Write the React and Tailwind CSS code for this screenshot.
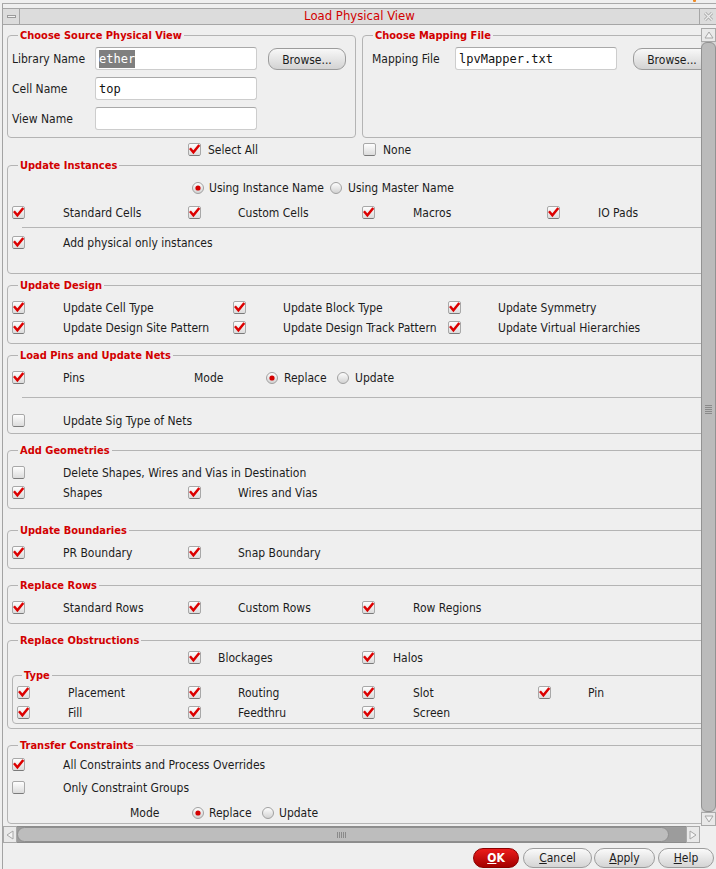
import React from "react";

const FONT = "font-['DejaVu_Sans_Condensed','DejaVu_Sans',sans-serif] font-stretch-condensed";

function CB({ on = true }) {
  return (
    <svg width="13" height="13" viewBox="0 0 13 13" className="shrink-0 block">
      <defs>
        <linearGradient id="cbg" x1="0" y1="0" x2="0" y2="1">
          <stop offset="0" stopColor="#ffffff" />
          <stop offset="1" stopColor="#dadada" />
        </linearGradient>
      </defs>
      <rect x="0.5" y="0.5" width="12" height="12" rx="1.5" fill="url(#cbg)" stroke="#a8a8a8" />
      <path d="M1.5 12.5 H11.5" stroke="#7a7a7a" />
      {on && (
        <path d="M2.8 6.2 L5.4 9.2 L10.5 3" fill="none" stroke="#dc0000" strokeWidth="2.5" strokeLinecap="square" />
      )}
    </svg>
  );
}

function RB({ on }) {
  return (
    <svg width="12" height="12" viewBox="0 0 12 12" className="shrink-0 block">
      <defs>
        <linearGradient id="rbg" x1="0" y1="0" x2="0" y2="1">
          <stop offset="0" stopColor="#ffffff" />
          <stop offset="1" stopColor="#d0d0d0" />
        </linearGradient>
      </defs>
      <circle cx="6" cy="6" r="5.5" fill="url(#rbg)" stroke="#a0a0a0" />
      {on && <circle cx="6" cy="6" r="2.6" fill="#d40000" />}
    </svg>
  );
}

function Chk({ on = true, label, ml = "ml-[38px]", w = "" }) {
  return (
    <div className={`flex items-center shrink-0 ${w}`}>
      <CB on={on} />
      <span className={`${ml} whitespace-nowrap`}>{label}</span>
    </div>
  );
}

function Rad({ on, label, ml = "ml-[5px]", w = "" }) {
  return (
    <div className={`flex items-center shrink-0 ${w}`}>
      <RB on={on} />
      <span className={`${ml} whitespace-nowrap`}>{label}</span>
    </div>
  );
}

function Legend({ children, ml = "ml-[6px]" }) {
  return (
    <div
      className={`block w-fit -mt-[8px] ${ml} px-[2px] pt-[1px] h-[14px] leading-[14px] bg-[#efefef] text-[11px] font-bold text-[#d20000] whitespace-nowrap`}
    >
      {children}
    </div>
  );
}

function Row({ children, className = "" }) {
  return <div className={`flex h-[20px] pt-[1px] items-center ${className}`}>{children}</div>;
}

function Sep({ className = "" }) {
  return <div className={`h-px bg-[#b6b6b6] ml-[10px] ${className}`} />;
}

function Input({ children }) {
  return (
    <div className="h-[23px] w-[162px] shrink-0 bg-white border border-[#cdcdcd] border-t-[#a9a9a9] rounded-[3px] flex items-center pl-[3px] pt-[1px] font-['DejaVu_Sans_Mono',monospace] text-[12px] text-[#111]">
      {children}
    </div>
  );
}

function Browse({ ml }) {
  return (
    <div
      className={`${ml} mt-[1px] h-[22px] w-[78px] shrink-0 rounded-[9px] border border-[#9c9c9c] bg-linear-to-b from-[#f8f8f8] to-[#d3d3d3] flex items-center justify-center pt-[1px] text-[12px]`}
    >
      Browse...
    </div>
  );
}

function Btn({ children, w, ml = "" }) {
  return (
    <div
      className={`${w} ${ml} h-[20px] shrink-0 rounded-full border border-[#9c9c9c] bg-linear-to-b from-[#fafafa] to-[#d4d4d4] flex items-center justify-center text-[12px]`}
    >
      {children}
    </div>
  );
}

function TriUp() {
  return (
    <svg width="10" height="8" viewBox="0 0 10 8">
      <path d="M1 7 L5 1 L9 7 Z" fill="#f4f4f4" stroke="#a6a6a6" />
    </svg>
  );
}
function TriDown() {
  return (
    <svg width="10" height="8" viewBox="0 0 10 8">
      <path d="M1 1 L5 7 L9 1 Z" fill="#f4f4f4" stroke="#a6a6a6" />
    </svg>
  );
}
function TriLeft() {
  return (
    <svg width="8" height="10" viewBox="0 0 8 10">
      <path d="M7 1 L1 5 L7 9 Z" fill="#f4f4f4" stroke="#a6a6a6" />
    </svg>
  );
}
function TriRight() {
  return (
    <svg width="8" height="10" viewBox="0 0 8 10">
      <path d="M1 1 L7 5 L1 9 Z" fill="#f4f4f4" stroke="#a6a6a6" />
    </svg>
  );
}

export default function App() {
  return (
    <div className={`w-[716px] h-[869px] bg-[#efefef] overflow-hidden flex flex-col text-[12px] text-[#1c1c1c] ${FONT}`}>
      {/* top strip */}
      <div className="h-[3px] flex">
        <div className="ml-[693px] w-[3px] h-[2px] bg-[#f08a24] rounded-b-[1px]" />
      </div>
      <div className="h-px ml-[2px] bg-[#a9a9a9]" />
      <div className="flex-1 ml-[2px] border-l border-[#a3a3a3] flex flex-col min-h-0">
        <div className="h-[4px]" />
        {/* title bar */}
        <div className="h-[17px] flex border-y border-[#a6a6a6] bg-[#dcdcdc] shrink-0">
          <div className="w-[17px] border-r border-[#a6a6a6] flex items-center justify-center">
            <div className="w-[9px] h-[3px] border border-[#9a9a9a] bg-[#f2f2f2]" />
          </div>
          <div className="flex-1 flex items-center justify-center pb-[2px] text-[13px] text-[#d20000] leading-none">
            Load Physical View
          </div>
          <div className="w-[17px] border-l border-[#a6a6a6] flex items-center justify-center">
            <svg width="11" height="11" viewBox="0 0 11 11">
              <path d="M2 2 L9 9 M9 2 L2 9" stroke="#a8a8a8" strokeWidth="3" />
              <path d="M2 2 L9 9 M9 2 L2 9" stroke="#ececec" strokeWidth="1.3" />
            </svg>
          </div>
        </div>

        {/* body */}
        <div className="h-[801px] flex shrink-0">
          <div className="w-[698px] overflow-hidden shrink-0">
            <div className="w-[740px] pl-[4px] pt-[10px]">
              {/* top fieldsets */}
              <div className="flex items-stretch">
                <div className="w-[349px] shrink-0 border border-[#b4b4b4] rounded-[4px] pl-[4px] pb-[7px]">
                  <Legend>Choose Source Physical View</Legend>
                  <div className="pt-[5px] flex flex-col gap-[7px]">
                    <div className="flex items-start h-[23px]">
                      <span className="w-[83px] shrink-0 h-[23px] flex items-center pt-[1px]">Library Name</span>
                      <Input>
                        <span className="bg-[#7f7f7f] text-white">ether</span>
                      </Input>
                      <Browse ml="ml-[11px]" />
                    </div>
                    <div className="flex items-center">
                      <span className="w-[83px] shrink-0 pt-[1px]">Cell Name</span>
                      <Input>top</Input>
                    </div>
                    <div className="flex items-center">
                      <span className="w-[83px] shrink-0 pt-[1px]">View Name</span>
                      <Input></Input>
                    </div>
                  </div>
                </div>
                <div className="ml-[6px] w-[349px] shrink-0 border border-[#b4b4b4] rounded-[4px] pl-[9px]">
                  <Legend ml="ml-[1px]">Choose Mapping File</Legend>
                  <div className="pt-[5px] flex items-start h-[28px]">
                    <span className="w-[83px] shrink-0 h-[23px] flex items-center pt-[1px]">Mapping File</span>
                    <Input>lpvMapper.txt</Input>
                    <Browse ml="ml-[16px]" />
                  </div>
                </div>
              </div>

              {/* select all */}
              <Row className="mt-[1px] ml-[181px]">
                <Chk label="Select All" ml="ml-[7px]" w="w-[175px]" />
                <Chk on={false} label="None" ml="ml-[7px]" />
              </Row>

              {/* Update Instances */}
              <div className="mt-[6px] border border-[#b4b4b4] rounded-[4px] pl-[4px] pb-[21px]">
                <Legend>Update Instances</Legend>
                <Row className="mt-[5px] pl-[180px]">
                  <Rad on label="Using Instance Name" w="w-[138px]" />
                  <Rad on={false} label="Using Master Name" ml="ml-[6px]" />
                </Row>
                <Row className="mt-[5px]">
                  <Chk label="Standard Cells" w="w-[176px]" />
                  <Chk label="Custom Cells" ml="ml-[37px]" w="w-[174px]" />
                  <Chk label="Macros" w="w-[185px]" />
                  <Chk label="IO Pads" />
                </Row>
                <Sep className="mt-[5px]" />
                <Row className="mt-[4px]">
                  <Chk label="Add physical only instances" />
                </Row>
              </div>

              {/* Update Design */}
              <div className="mt-[11px] border border-[#b4b4b4] rounded-[4px] pl-[4px] pb-[6px]">
                <Legend>Update Design</Legend>
                <Row className="mt-[5px]">
                  <Chk label="Update Cell Type" w="w-[221px]" />
                  <Chk label="Update Block Type" ml="ml-[37px]" w="w-[215px]" />
                  <Chk label="Update Symmetry" ml="ml-[37px]" />
                </Row>
                <Row>
                  <Chk label="Update Design Site Pattern" w="w-[221px]" />
                  <Chk label="Update Design Track Pattern" ml="ml-[37px]" w="w-[215px]" />
                  <Chk label="Update Virtual Hierarchies" ml="ml-[37px]" />
                </Row>
              </div>

              {/* Load Pins */}
              <div className="mt-[11px] border border-[#b4b4b4] rounded-[4px] pl-[4px] pb-[3px]">
                <Legend>Load Pins and Update Nets</Legend>
                <Row className="mt-[5px]">
                  <Chk label="Pins" w="w-[182px]" />
                  <span className="w-[72px] shrink-0">Mode</span>
                  <Rad on label="Replace" ml="ml-[6px]" w="w-[71px]" />
                  <Rad on={false} label="Update" ml="ml-[6px]" />
                </Row>
                <Sep className="mt-[10px]" />
                <Row className="mt-[12px]">
                  <Chk on={false} label="Update Sig Type of Nets" />
                </Row>
              </div>

              {/* Add Geometries */}
              <div className="mt-[16px] border border-[#b4b4b4] rounded-[4px] pl-[4px] pb-[6px]">
                <Legend>Add Geometries</Legend>
                <Row className="mt-[5px]">
                  <Chk on={false} label="Delete Shapes, Wires and Vias in Destination" />
                </Row>
                <Row>
                  <Chk label="Shapes" w="w-[176px]" />
                  <Chk label="Wires and Vias" ml="ml-[37px]" />
                </Row>
              </div>

              {/* Update Boundaries */}
              <div className="mt-[21px] border border-[#b4b4b4] rounded-[4px] pl-[4px] pb-[6px]">
                <Legend>Update Boundaries</Legend>
                <Row className="mt-[5px]">
                  <Chk label="PR Boundary" w="w-[176px]" />
                  <Chk label="Snap Boundary" ml="ml-[37px]" />
                </Row>
              </div>

              {/* Replace Rows */}
              <div className="mt-[16px] border border-[#b4b4b4] rounded-[4px] pl-[4px] pb-[6px]">
                <Legend>Replace Rows</Legend>
                <Row className="mt-[5px]">
                  <Chk label="Standard Rows" w="w-[176px]" />
                  <Chk label="Custom Rows" ml="ml-[37px]" w="w-[174px]" />
                  <Chk label="Row Regions" />
                </Row>
              </div>

              {/* Replace Obstructions */}
              <div className="mt-[16px] border border-[#b4b4b4] rounded-[4px] pl-[4px] pb-[4px]">
                <Legend>Replace Obstructions</Legend>
                <Row className="pl-[176px]">
                  <Chk label="Blockages" ml="ml-[17px]" w="w-[174px]" />
                  <Chk label="Halos" ml="ml-[18px]" />
                </Row>
                <div className="mt-[8px] border border-[#b4b4b4] rounded-[4px] pl-[4px] pb-[1px]">
                  <Legend ml="ml-[5px]">Type</Legend>
                  <Row>
                    <Chk label="Placement" w="w-[171px]" />
                    <Chk label="Routing" ml="ml-[37px]" w="w-[174px]" />
                    <Chk label="Slot" w="w-[176px]" />
                    <Chk label="Pin" ml="ml-[37px]" />
                  </Row>
                  <Row>
                    <Chk label="Fill" w="w-[171px]" />
                    <Chk label="Feedthru" ml="ml-[37px]" w="w-[174px]" />
                    <Chk label="Screen" />
                  </Row>
                </div>
              </div>

              {/* Transfer Constraints */}
              <div className="mt-[16px] border border-[#b4b4b4] rounded-[4px] pl-[4px] pb-[1px]">
                <Legend>Transfer Constraints</Legend>
                <Row className="mt-[2px]">
                  <Chk label="All Constraints and Process Overrides" />
                </Row>
                <Row className="mt-[3px]">
                  <Chk on={false} label="Only Constraint Groups" />
                </Row>
                <Row className="mt-[5px] pl-[118px]">
                  <span className="w-[62px] shrink-0">Mode</span>
                  <Rad on label="Replace" w="w-[70px]" />
                  <Rad on={false} label="Update" />
                </Row>
              </div>
            </div>
          </div>

          {/* vertical scrollbar */}
          <div className="w-[15px] shrink-0 flex flex-col pt-[3px]">
            <div className="h-[14px] shrink-0 border border-[#a9a9a9] bg-[#e9e9e9] flex items-center justify-center">
              <TriUp />
            </div>
            <div className="flex-1 bg-[#d6d6d6]">
              <div className="h-full border border-[#929292] bg-[#bbbbbb] rounded-[6px] flex flex-col items-center pt-[362px]">
                <div className="flex flex-col gap-[1px]">
                  <div className="w-[7px] h-px bg-[#8a8a8a]" />
                  <div className="w-[7px] h-px bg-[#8a8a8a]" />
                  <div className="w-[7px] h-px bg-[#8a8a8a]" />
                  <div className="w-[7px] h-px bg-[#8a8a8a]" />
                  <div className="w-[7px] h-px bg-[#8a8a8a]" />
                </div>
              </div>
            </div>
            <div className="h-[14px] shrink-0 border border-[#a9a9a9] bg-[#e9e9e9] flex items-center justify-center">
              <TriDown />
            </div>
          </div>
        </div>

        {/* horizontal scrollbar */}
        <div className="h-[17px] flex shrink-0">
          <div className="w-[14px] shrink-0 border border-[#a9a9a9] bg-[#e9e9e9] flex items-center justify-center">
            <TriLeft />
          </div>
          <div className="w-[669px] shrink-0 bg-[#9c9c9c] border-y border-[#8c8c8c] flex">
            <div className="w-[652px] border border-[#8e8e8e] bg-[#bdbdbd] rounded-full flex items-center pl-[319px]">
              <div className="flex gap-[1px]">
                <div className="w-px h-[6px] bg-[#8a8a8a]" />
                <div className="w-px h-[6px] bg-[#8a8a8a]" />
                <div className="w-px h-[6px] bg-[#8a8a8a]" />
                <div className="w-px h-[6px] bg-[#8a8a8a]" />
                <div className="w-px h-[6px] bg-[#8a8a8a]" />
              </div>
            </div>
          </div>
          <div className="w-[14px] shrink-0 border border-[#a9a9a9] bg-[#e9e9e9] flex items-center justify-center">
            <TriRight />
          </div>
        </div>

        {/* buttons */}
        <div className="flex-1 flex justify-end items-start pt-[5px] pr-[2px]">
          <div className="w-[46px] h-[20px] shrink-0 rounded-full border border-[#8a0000] bg-linear-to-b from-[#ec1c1c] to-[#a40000] flex items-center justify-center text-white font-bold text-[12px]">
            <span>
              <span className="underline">O</span>K
            </span>
          </div>
          <Btn w="w-[69px]" ml="ml-[4px]">
            <span>
              <span className="underline">C</span>ancel
            </span>
          </Btn>
          <Btn w="w-[61px]" ml="ml-[2px]">
            <span>
              <span className="underline">A</span>pply
            </span>
          </Btn>
          <Btn w="w-[56px]" ml="ml-[3px]">
            <span>
              <span className="underline">H</span>elp
            </span>
          </Btn>
        </div>
      </div>
    </div>
  );
}
